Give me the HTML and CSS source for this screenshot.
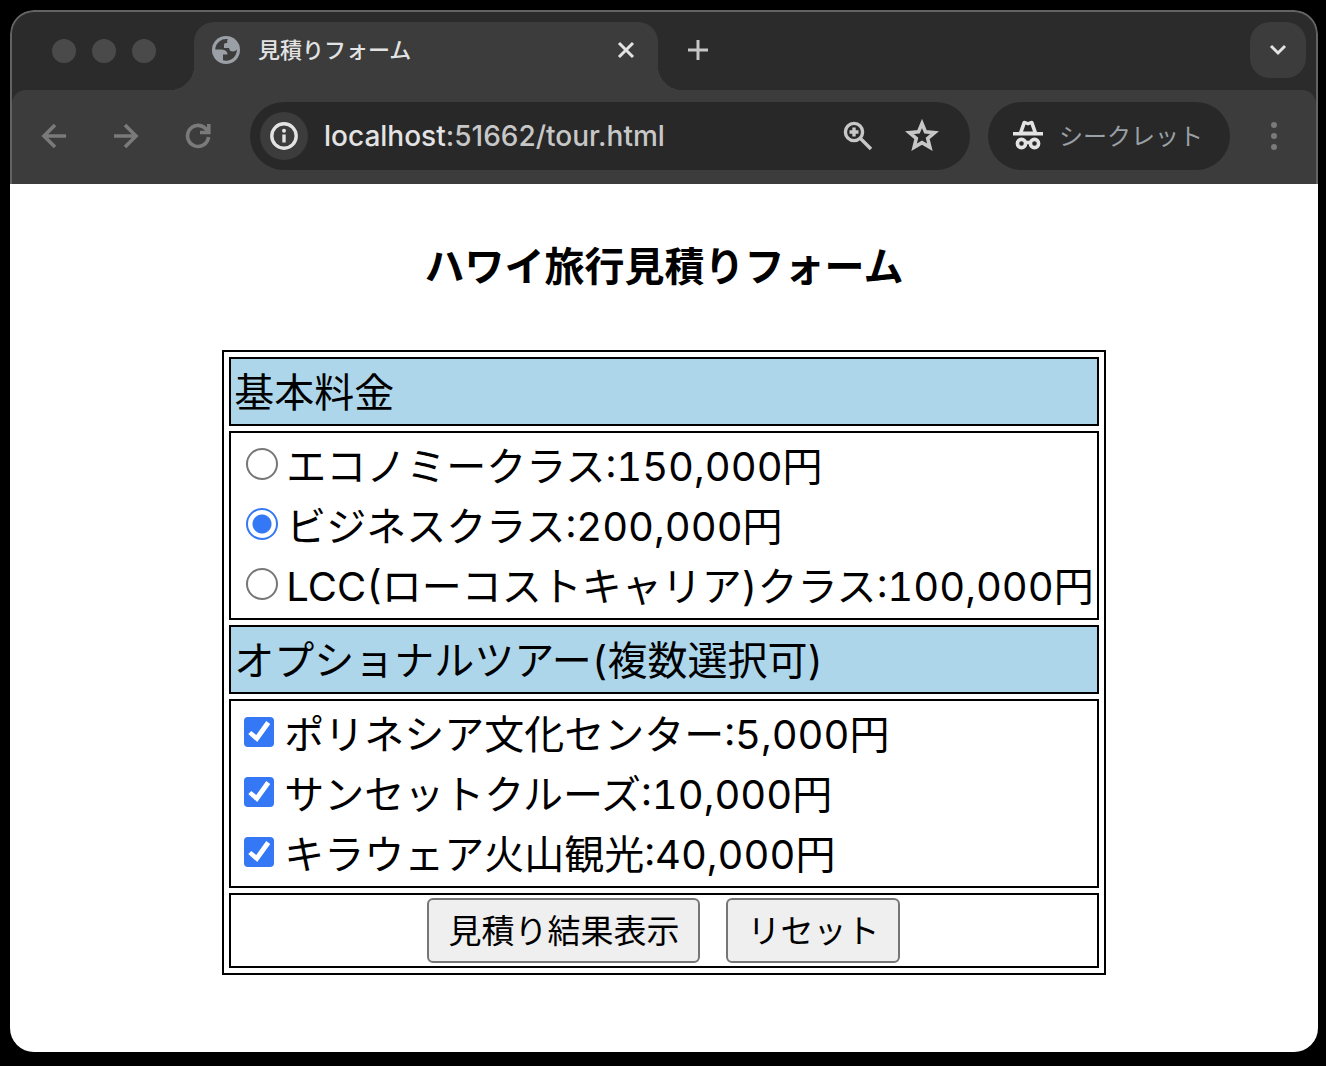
FILE: index.html
```html
<!DOCTYPE html>
<html lang="ja">
<head>
<meta charset="utf-8">
<meta name="viewport" content="width=device-width, initial-scale=1">
<title>見積りフォーム</title>
<link rel="stylesheet" href="styles.css">
</head>
<body>
<div class="window">
  <header class="chrome">
    <div class="tabstrip">
      <div class="lights"><span class="light"></span><span class="light"></span><span class="light"></span></div>
      <div class="tab">
        <svg class="globe" viewBox="0 0 28 28" aria-hidden="true"><circle cx="14" cy="14" r="14" fill="#9aa0a6"/><path d="M16 3.200A11 11 0 0 0 3.200 13.500H9.500Q15.500 14 15.500 18.500H11V24.300A11 11 0 0 0 24.900 13.500Q23.500 15.500 21 15.500Q17.500 15.500 17 12H12V8.500Q12 7 14 7H15.500Q14.500 4.500 16 3.200Z" fill="#3c3c3c"/></svg>
        <span class="tab-title">見積りフォーム</span>
        <button class="icon-button tab-close" type="button" aria-label="閉じる"><svg width="18" height="18" viewBox="0 0 18 18"><path d="M2 2 16 16M16 2 2 16" fill="none" stroke="#e3e3e3" stroke-width="3"/></svg></button>
      </div>
      <button class="icon-button new-tab" type="button" aria-label="新しいタブ"><svg width="20" height="20" viewBox="0 0 20 20"><path d="M10 0V20M0 10H20" fill="none" stroke="#c7c7c7" stroke-width="3"/></svg></button>
      <button class="icon-button tab-search" type="button" aria-label="タブを検索"><svg width="18" height="12" viewBox="0 0 18 12"><path d="M2 2 9 9 16 2" fill="none" stroke="#e3e3e3" stroke-width="3"/></svg></button>
    </div>
    <div class="toolbar">
      <div class="nav">
        <button class="icon-button nav-button" type="button" aria-label="戻る"><svg width="26" height="26" viewBox="0 0 26 26"><path d="M25 13H3M14 2 3 13 14 24" fill="none" stroke="#7a7a7a" stroke-width="3.600"/></svg></button>
        <button class="icon-button nav-button" type="button" aria-label="進む"><svg width="26" height="26" viewBox="0 0 26 26"><path d="M1 13H23M12 2 23 13 12 24" fill="none" stroke="#7a7a7a" stroke-width="3.600"/></svg></button>
        <button class="icon-button nav-button" type="button" aria-label="再読み込み"><svg width="26" height="26" viewBox="0 0 26 26"><path d="M23.500 14A10.500 10.500 0 1 1 20.500 5.500L23 8M23.800 1V9.500H15" fill="none" stroke="#7a7a7a" stroke-width="3.600"/></svg></button>
      </div>
      <div class="omnibox">
        <button class="icon-button site-info" type="button" aria-label="サイト情報"><svg width="28" height="28" viewBox="0 0 28 28"><circle cx="14" cy="14" r="12.200" fill="none" stroke="#e3e3e3" stroke-width="3.400"/><path d="M14 12.500V20.500" stroke="#e3e3e3" stroke-width="3.400"/><circle cx="14" cy="8.800" r="2" fill="#e3e3e3"/></svg></button>
        <span class="url"><span class="host">localhost</span>:51662/tour.html</span>
        <button class="icon-button box-action" type="button" aria-label="ズーム"><svg width="30" height="30" viewBox="0 0 30 30"><g fill="none" stroke="#c7c7c7" stroke-width="3.400"><circle cx="11" cy="11" r="8.600"/><path d="M17.500 17.500 28 28M11 6.500V15.500M6.500 11H15.500"/></g></svg></button>
        <button class="icon-button box-action" type="button" aria-label="ブックマーク"><svg width="34" height="34" viewBox="0 0 34 34"><path d="M17 4.500 20.500 12.900 29.600 13.600 22.700 19.500 24.900 28.300 17 23.600 9.100 28.300 11.300 19.500 4.400 13.600 13.500 12.900Z" fill="none" stroke="#c7c7c7" stroke-width="3.600"/></svg></button>
      </div>
      <div class="incognito">
        <svg width="30" height="30" viewBox="0 0 30 30" aria-hidden="true"><path d="M0 12H6L9.500 2Q10.500 0 12.500 1L15 2 17.500 1Q19.500 0 20.500 2L24 12H30V15.500H0Z" fill="#e3e3e3"/><path d="M10 11.500 12.500 4.500 15 5.500 17.500 4.500 20 11.500Z" fill="#282828"/><g fill="none" stroke="#e3e3e3" stroke-width="3.600"><circle cx="8.500" cy="23.500" r="4.100"/><circle cx="21.500" cy="23.500" r="4.100"/><path d="M12 22.500H18"/></g></svg>
        <span>シークレット</span>
      </div>
      <button class="icon-button menu" type="button" aria-label="メニュー"><svg width="6" height="28" viewBox="0 0 6 28" fill="#7a7a7a"><circle cx="3" cy="3" r="3"/><circle cx="3" cy="14" r="3"/><circle cx="3" cy="25" r="3"/></svg></button>
    </div>
  </header>
  <main class="page">
    <h1 class="title">ハワイ旅行見積りフォーム</h1>
    <form>
      <table class="quote">
        <tbody>
          <tr><th scope="col">基本料金</th></tr>
          <tr><td>
            <label class="option"><input class="radio" type="radio" name="fare"><span>エコノミークラス<span class="latin">:150,000</span>円</span></label>
            <label class="option"><input class="radio" type="radio" name="fare" checked><span>ビジネスクラス<span class="latin">:200,000</span>円</span></label>
            <label class="option"><input class="radio" type="radio" name="fare"><span><span class="latin">LCC(</span>ローコストキャリア<span class="latin">)</span>クラス<span class="latin">:100,000</span>円</span></label>
          </td></tr>
          <tr><th scope="col">オプショナルツアー<span class="latin">(</span>複数選択可<span class="latin">)</span></th></tr>
          <tr><td>
            <label class="option"><input class="check" type="checkbox" checked><span>ポリネシア文化センター<span class="latin">:5,000</span>円</span></label>
            <label class="option"><input class="check" type="checkbox" checked><span>サンセットクルーズ<span class="latin">:10,000</span>円</span></label>
            <label class="option"><input class="check" type="checkbox" checked><span>キラウェア火山観光<span class="latin">:40,000</span>円</span></label>
          </td></tr>
          <tr><td>
            <div class="actions">
              <button class="action" type="button">見積り結果表示</button>
              <button class="action" type="reset">リセット</button>
            </div>
          </td></tr>
        </tbody>
      </table>
    </form>
  </main>
</div>
</body>
</html>
```
FILE: styles.css
```css
* { box-sizing: border-box; }

body {
  display: flex;
  min-height: 100vh;
  margin: 0;
  padding: 10px 8px 14px 10px;
  background: #000;
  font-family: "Noto Sans CJK JP", sans-serif;
}

.window {
  display: flex;
  flex: 1;
  flex-direction: column;
  min-width: 0;
  overflow: hidden;
  border-radius: 24px;
}

.chrome {
  border: 2px solid #636363;
  border-bottom: 0;
  border-radius: 24px 24px 0 0;
  background: #2b2b2b;
}

.icon-button {
  display: flex;
  flex: none;
  align-items: center;
  justify-content: center;
  padding: 0;
  border: 0;
  background: none;
}

.tabstrip {
  display: flex;
  align-items: flex-start;
  height: 78px;
  padding: 10px 10px 0 40px;
}

.lights {
  display: flex;
  align-items: center;
  gap: 16px;
  height: 58px;
  margin-right: 38px;
}

.light {
  width: 24px;
  height: 24px;
  border-radius: 50%;
  background: #4a4a4a;
}

.tab {
  position: relative;
  display: flex;
  align-items: center;
  width: 464px;
  height: 68px;
  padding: 0 18px 12px;
  border-radius: 20px 20px 0 0;
  background: #3c3c3c;
}

.tab::before,
.tab::after {
  position: absolute;
  bottom: 0;
  width: 24px;
  height: 24px;
  content: "";
}

.tab::before {
  right: 100%;
  background: radial-gradient(circle at 0 0, transparent 24px, #3c3c3c 24px);
}

.tab::after {
  left: 100%;
  background: radial-gradient(circle at 100% 0, transparent 24px, #3c3c3c 24px);
}

.globe {
  width: 28px;
  height: 28px;
  margin-right: 18px;
}

.tab-title {
  flex: 1;
  padding-bottom: 4px;
  color: #e3e3e3;
  font-size: 22px;
  font-weight: 500;
  line-height: 32px;
}

.tab-close {
  width: 28px;
  height: 28px;
}

.new-tab {
  width: 40px;
  height: 56px;
  margin-left: 20px;
}

.tab-search {
  width: 56px;
  height: 56px;
  margin-left: auto;
  border-radius: 20px;
  background: #3c3c3c;
}

.toolbar {
  display: flex;
  align-items: center;
  height: 94px;
  padding-bottom: 2px;
  border-radius: 14px 14px 0 0;
  background: #3c3c3c;
}

.nav {
  display: flex;
  margin: 0 16px 0 6px;
}

.nav-button {
  width: 72px;
  height: 48px;
}

.omnibox {
  display: flex;
  flex: 1;
  align-items: center;
  height: 68px;
  padding: 0 16px 0 10px;
  border-radius: 34px;
  background: #282828;
}

.site-info {
  width: 48px;
  height: 48px;
  border-radius: 50%;
  background: #3c3c3c;
}

.url {
  flex: 1;
  margin-left: 16px;
  color: #c7c7c7;
  font-family: Inter, sans-serif;
  font-size: 28px;
  font-weight: 500;
  line-height: 36px;
}

.host { color: #e3e3e3; }

.box-action {
  width: 64px;
  height: 48px;
}

.incognito {
  display: flex;
  align-items: center;
  gap: 16px;
  width: 242px;
  height: 68px;
  margin-left: 18px;
  padding: 0 0 2px 25px;
  border-radius: 34px;
  background: #282828;
  color: #9aa0a6;
  font-size: 24px;
  line-height: 36px;
}

.menu {
  width: 56px;
  height: 48px;
  margin: 0 14px 0 16px;
}

.page {
  flex: 1;
  padding: 50px 16px;
  background: #fff;
  color: #000;
}

.title {
  margin: 0 0 56px;
  font-size: 40px;
  font-weight: 700;
  line-height: 60px;
  text-align: center;
}

.quote {
  width: 882px;
  max-width: 100%;
  margin: 0 auto;
  border: 2px solid #000;
  border-spacing: 5px;
  font-size: 40px;
  line-height: 60px;
}

.quote th,
.quote td {
  padding: 1px 3px 4px;
  border: 2px solid #000;
}

.quote th {
  background: #add6eb;
  font-weight: 400;
  text-align: left;
}

.latin {
  font-family: Inter, sans-serif;
  font-size: 40px;
  font-variant-numeric: tabular-nums;
  line-height: 1;
}

.option {
  display: flex;
  align-items: center;
  height: 60px;
  white-space: nowrap;
}

.radio,
.check {
  flex: none;
  margin: 0;
  appearance: none;
}

.radio {
  width: 32px;
  height: 32px;
  margin: 0 8px 0 12px;
  border: 2px solid #767676;
  border-radius: 50%;
}

.radio:checked {
  border-color: #3478f6;
  background: radial-gradient(circle, #3478f6 9px, transparent 10px);
}

.check {
  width: 30px;
  height: 30px;
  margin: 0 10px;
  border: 1px solid #767676;
  border-radius: 4px;
}

.check:checked {
  border: 0;
  background: #3478f6;
}

.check:checked::before {
  display: block;
  width: 30px;
  height: 30px;
  background: #fff;
  clip-path: polygon(4px 17px, 7px 14px, 12px 18px, 22px 4px, 26px 7px, 13px 25px);
  content: "";
}

.actions {
  display: flex;
  justify-content: center;
  gap: 26px;
  padding-top: 2px;
  margin-bottom: -1px;
}

.action {
  height: 65px;
  padding: 0 19px 4px;
  border: 2px solid #767676;
  border-radius: 6px;
  background: #efefef;
  color: #000;
  font-family: inherit;
  font-size: 33px;
  line-height: 48px;
}
```
